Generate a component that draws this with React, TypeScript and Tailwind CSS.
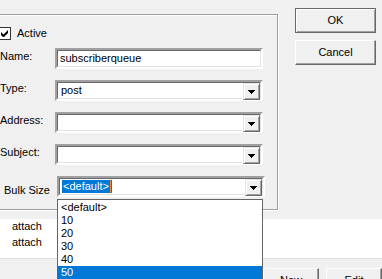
import React from 'react';

const font = { fontFamily: "'Liberation Sans', Arial, sans-serif" };

const Arrow = () => (
  <svg width="7" height="4" viewBox="0 0 7 4" className="block">
    <path d="M0 0h7v1H0zM1 1h5v1H1zM2 2h3v1H2zM3 3h1v1H3z" fill="#000" />
  </svg>
);

const Combo = ({ value, selected, className = '' }: { value?: string; selected?: boolean; className?: string }) => (
  <div
    className={`flex h-[21px] w-[208px] border-t-2 border-l-2 border-b-2 border-r-2 border-t-[#a0a0a0] border-l-[#a0a0a0] border-b-[#fff] border-r-[#fff] ${className}`}
  >
    <div className="flex flex-1 border border-t-[#696969] border-l-[#696969] border-b-[#e3e3e3] border-r-[#e3e3e3] bg-white">
      <div className="flex flex-1 items-center pl-[2px]">
        {selected ? (
          <span className="flex h-[13px] items-center bg-[#0078d7] px-[1px] text-white">
            {value}
            <span className="ml-[1px] h-[13px] w-[1px] bg-[#ff8728]" />
          </span>
        ) : (
          <span className="pl-[1px]">{value}</span>
        )}
      </div>
      <div className="flex h-[17px] w-[17px] items-center justify-center border border-t-[#e3e3e3] border-l-[#e3e3e3] border-b-[#696969] border-r-[#696969] bg-[#f0f0f0] shadow-[inset_1px_1px_0_#fff,inset_-1px_-1px_0_#a0a0a0]">
        <Arrow />
      </div>
    </div>
  </div>
);

const Field = ({ label, children }: { label: string; children: React.ReactNode }) => (
  <div className="flex h-[21px]">
    <div className="w-[55px] pt-[2px]">{label}</div>
    {children}
  </div>
);

const Button = ({ label, isDefault }: { label: string; isDefault?: boolean }) => (
  <div
    className={`flex h-[25px] w-[81px] items-center justify-center bg-[#f0f0f0] ${
      isDefault
        ? 'border border-[#696969] shadow-[inset_1px_1px_0_#fff,inset_-1px_-1px_0_#a0a0a0]'
        : 'border border-t-[#fff] border-l-[#fff] border-b-[#696969] border-r-[#696969] shadow-[inset_-1px_-1px_0_#a0a0a0]'
    }`}
  >
    {label}
  </div>
);

export default function App() {
  const options = ['<default>', '10', '20', '30', '40', '50'];

  return (
    <div className="relative h-[279px] w-[382px] overflow-hidden bg-[#f0f0f0] text-[11px] leading-[13px] text-black" style={font}>
      {/* dialog top */}
      <div className="flex h-[219px]">
        <div className="-ml-[10px] mt-[14px] h-[196px] w-[288px] border border-[#a0a0a0] pl-[9px] shadow-[1px_1px_0_#fff,inset_0_1px_0_#fff]">
          <div className="-ml-[2px] mt-[12px] flex h-[13px] items-center">
            <div className="flex h-[13px] w-[13px] items-center justify-center border border-[#333] bg-white">
              <svg width="7" height="7" viewBox="0 0 7 7" className="block">
                <path d="M0 2v3l2 2h1l4-4V0L2.5 4.5z" fill="#000" />
              </svg>
            </div>
            <span className="ml-[6px]">Active</span>
          </div>

          <div className="mt-[8px] flex flex-col gap-[11px]">
            <Field label="Name:">
              <div className="h-[21px] w-[208px] border-2 border-t-[#a0a0a0] border-l-[#a0a0a0] border-b-[#fff] border-r-[#fff]">
                <div className="flex h-full items-center border border-t-[#696969] border-l-[#696969] border-b-[#e3e3e3] border-r-[#e3e3e3] bg-white pl-[2px]">
                  subscriberqueue
                </div>
              </div>
            </Field>
            <Field label="Type:">
              <Combo value="post" />
            </Field>
            <Field label="Address:">
              <Combo />
            </Field>
            <Field label="Subject:">
              <Combo />
            </Field>
            <div className="flex h-[21px]">
              <div className="w-[57px] pl-[4px] pt-[8px]">Bulk Size</div>
              <Combo value="<default>" selected className="w-[206px]" />
            </div>
          </div>
        </div>

        <div className="ml-[17px] flex flex-col gap-[7px] pt-[8px]">
          <Button label="OK" isDefault />
          <Button label="Cancel" />
        </div>
      </div>

      {/* list view */}
      <div className="flex h-[40px] flex-col border-b border-[#e3e3e3] bg-white pl-[12px] pt-[1px]">
        <div className="h-[16px]">attach</div>
        <div className="h-[16px]">attach</div>
      </div>

      {/* bottom buttons */}
      <div className="flex gap-[7px] pl-[263px] pt-[9px]">
        <Button label="New" />
        <Button label="Edit" />
      </div>

      {/* open dropdown */}
      <div className="absolute left-[57px] top-[199px] w-[206px] border border-[#646464] bg-white pt-[1px]">
        {options.map((o, i) => (
          <div
            key={o}
            className={`h-[13px] pl-[3px] leading-[13px] ${i === options.length - 1 ? 'bg-[#0078d7] text-white' : ''}`}
          >
            {o}
          </div>
        ))}
      </div>
    </div>
  );
}
